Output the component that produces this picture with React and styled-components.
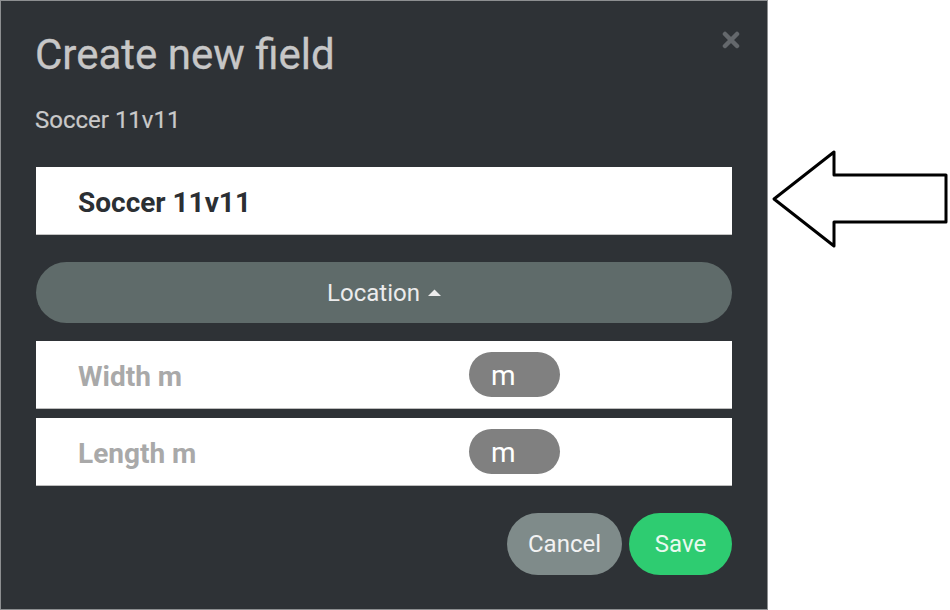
import React from "react";
import styled, { createGlobalStyle } from "styled-components";

const Global = createGlobalStyle`
  html, body { margin: 0; padding: 0; background: #ffffff; }
  body { font-family: Roboto, "Liberation Sans", sans-serif; }
  * { box-sizing: border-box; }
`;

const Page = styled.div`
  display: flex;
  align-items: flex-start;
  width: 950px;
  height: 610px;
  overflow: hidden;
`;

const Dialog = styled.div`
  width: 768px;
  height: 610px;
  background: #2e3236;
  border: 1px solid #8d8f91;
  padding: 33px 35px 0 35px;
  display: flex;
  flex-direction: column;
`;

const Header = styled.div`
  display: flex;
  justify-content: space-between;
  align-items: flex-start;
`;

const Title = styled.h1`
  margin: 0 0 0 -1px;
  font-size: 42px;
  line-height: 42px;
  font-weight: 400;
  color: #c7c7c7;
  -webkit-text-stroke: 0.3px #c7c7c7;
`;

const Close = styled.button`
  border: 0;
  background: none;
  padding: 0;
  margin: -3px -8px 0 0;
  width: 18px;
  height: 18px;
  display: flex;
  cursor: pointer;
`;

const Subtitle = styled.div`
  margin-top: 32px;
  margin-left: -1px;
  font-size: 24px;
  line-height: 24px;
  color: #c9c9c9;
  -webkit-text-stroke: 0.2px #c9c9c9;
`;

const NameInput = styled.div`
  margin-top: 35px;
  height: 68px;
  background: #ffffff;
  border-bottom: 1px solid #c4c4c4;
  display: flex;
  align-items: center;
  padding-left: 42px;
  padding-top: 3px;
  font-size: 28px;
  font-weight: 700;
  color: #2b2f33;
`;

const Toggle = styled.button`
  margin-top: 27px;
  height: 61px;
  border: 0;
  border-radius: 31px;
  background: #5f6b6a;
  color: #ececec;
  font-family: Roboto, "Liberation Sans", sans-serif;
  font-size: 24px;
  display: flex;
  align-items: center;
  justify-content: center;
  gap: 8px;
  padding: 0;
`;

const Row = styled.div`
  margin-top: ${(p) => p.$mt}px;
  height: 68px;
  background: #ffffff;
  border-bottom: 1px solid #bdbdbd;
  display: flex;
  align-items: center;
  padding-left: 42px;
`;

const Label = styled.div`
  width: 391px;
  padding-top: 4px;
  font-size: 28px;
  font-weight: 700;
  color: #a9a9a9;
`;

const Unit = styled.div`
  width: 91px;
  height: 45px;
  border-radius: 23px;
  background: #808080;
  color: #ffffff;
  font-size: 28px;
  display: flex;
  align-items: center;
  padding-left: 22px;
  padding-top: 2px;
`;

const Actions = styled.div`
  margin-top: 27px;
  display: flex;
  justify-content: flex-end;
  gap: 7px;
`;

const ActionButton = styled.button`
  width: ${(p) => p.$w}px;
  height: 62px;
  border: 0;
  border-radius: 31px;
  background: ${(p) => p.$bg};
  color: ${(p) => p.$fg};
  font-family: Roboto, "Liberation Sans", sans-serif;
  font-size: 24px;
  padding: 0;
  display: flex;
  align-items: center;
  justify-content: center;
`;

const Pointer = styled.svg`
  margin-left: 3px;
  margin-top: 149px;
  flex: none;
`;

export default function App() {
  return (
    <Page>
      <Global />
      <Dialog>
        <Header>
          <Title>Create new field</Title>
          <Close aria-label="Close">
            <svg width="18" height="18" viewBox="0 0 18 18">
              <path
                d="M3 3 L15 15 M15 3 L3 15"
                stroke="#64686c"
                strokeWidth="4.5"
                strokeLinecap="round"
              />
            </svg>
          </Close>
        </Header>
        <Subtitle>Soccer 11v11</Subtitle>
        <NameInput>Soccer 11v11</NameInput>
        <Toggle>
          <span>Location</span>
          <svg width="13" height="8" viewBox="0 0 13 8">
            <path d="M0 7 L6.5 0.5 L13 7 Z" fill="#ececec" />
          </svg>
        </Toggle>
        <Row $mt={18}>
          <Label>Width m</Label>
          <Unit>m</Unit>
        </Row>
        <Row $mt={9}>
          <Label>Length m</Label>
          <Unit>m</Unit>
        </Row>
        <Actions>
          <ActionButton $w={115} $bg="#7f8b8a" $fg="#f2f2f2">Cancel</ActionButton>
          <ActionButton $w={103} $bg="#2ecc71" $fg="#e9f9ef">Save</ActionButton>
        </Actions>
      </Dialog>
      <Pointer width="178" height="100" viewBox="771 149 178 100">
        <path
          d="M774 199 L834 152 L834 175 L946 175 L946 222 L834 222 L834 246 Z"
          fill="#ffffff"
          stroke="#000000"
          strokeWidth="3"
          strokeLinejoin="round"
        />
      </Pointer>
    </Page>
  );
}
